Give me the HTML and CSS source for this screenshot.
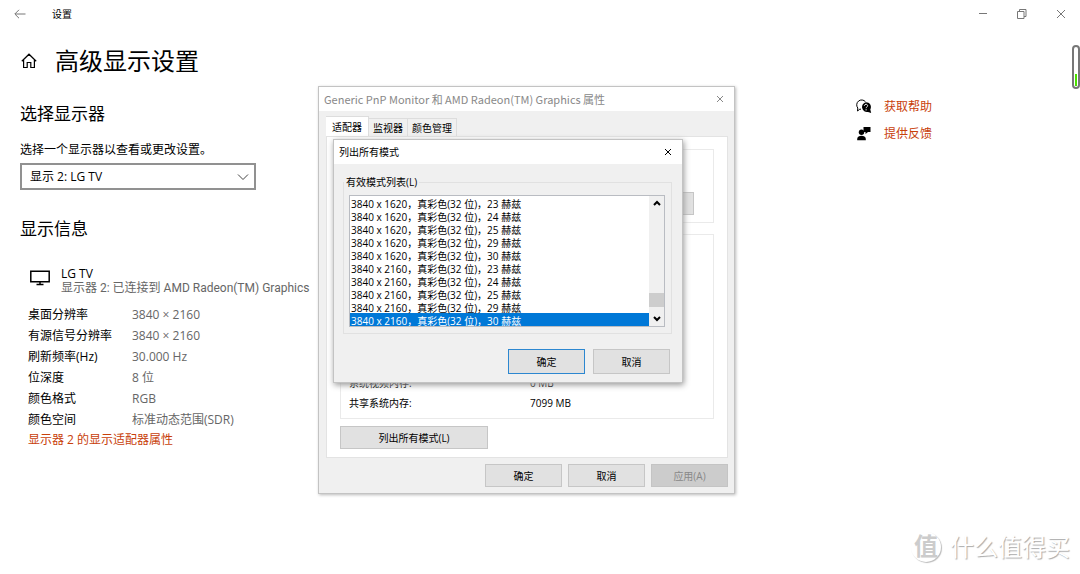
FILE: index.html
```html
<!DOCTYPE html>
<html lang="zh-CN">
<head>
<meta charset="utf-8">
<title>设置</title>
<link rel="stylesheet" href="styles.css">
</head>
<body>
<header class="titlebar">
  <button class="icon-button back" aria-label="返回"><svg width="12" height="10" viewBox="0 0 12 10"><path d="M11.500 5H1M5 .8 .8 5 5 9.200"/></svg></button>
  <span class="app-name">设置</span>
  <div class="window-controls">
    <button class="icon-button" aria-label="最小化"><svg width="10" height="10" viewBox="0 0 10 10"><path d="M1 4.500h8"/></svg></button>
    <button class="icon-button" aria-label="还原"><svg width="10" height="10" viewBox="0 0 10 10"><path d="M.5 2.500h6.500v7H.5zM2.500 2.500v-2h6.500v7H7"/></svg></button>
    <button class="icon-button" aria-label="关闭"><svg width="10" height="10" viewBox="0 0 10 10"><path d="M1 1l8 8M9 1L1 9"/></svg></button>
  </div>
</header>

<main class="page">
  <section class="settings">
    <div class="page-title">
      <svg class="home" width="16" height="16" viewBox="0 0 16 16"><path d="M.8 8.200 8 1.200l7.200 7M2.600 6.700v7.800h3.600V9.500h3.600v5h3.600V6.700"/></svg>
      <h1>高级显示设置</h1>
    </div>
    <h2>选择显示器</h2>
    <label class="picker-label" for="display">选择一个显示器以查看或更改设置。</label>
    <div class="picker">
      <select id="display"><option>显示 2: LG TV</option></select>
      <svg width="12" height="8" viewBox="0 0 12 8"><path d="M1 1.500l5 5 5-5"/></svg>
    </div>
    <h2>显示信息</h2>
    <div class="monitor">
      <svg width="20" height="16" viewBox="0 0 20 16"><path d="M.8 1.200h18.400v10.600H.8zM10 12v2.600M6.500 14.600h7"/></svg>
      <div>
        <div>LG TV</div>
        <div class="muted">显示器 2: 已连接到 AMD Radeon(TM) Graphics</div>
      </div>
    </div>
    <dl class="facts">
      <dt>桌面分辨率</dt><dd>3840 × 2160</dd>
      <dt>有源信号分辨率</dt><dd>3840 × 2160</dd>
      <dt>刷新频率(Hz)</dt><dd>30.000 Hz</dd>
      <dt>位深度</dt><dd>8 位</dd>
      <dt>颜色格式</dt><dd>RGB</dd>
      <dt>颜色空间</dt><dd>标准动态范围(SDR)</dd>
    </dl>
    <a class="link adapter-link" href="#">显示器 2 的显示适配器属性</a>
  </section>

  <nav class="help">
    <a class="link" href="#">
      <svg width="16" height="16" viewBox="0 0 16 16"><path class="line" d="M5 10.200H3.800l-2.300 1.800.3-3A4.600 4.600 0 1 1 9.500 2.800"/><path d="M10 3.200a4.900 4.900 0 0 1 4.300 7.300l.9 3.600-3.200-1.200A4.900 4.900 0 1 1 10 3.200z"/><path class="mark" d="M8.400 6.800c0-2 3.200-2 3.200-.1 0 1.300-1.500 1.200-1.500 2.500M10.100 10.200v1.200"/></svg>
      获取帮助</a>
    <a class="link" href="#">
      <svg width="16" height="16" viewBox="0 0 16 16"><path d="M7.500 1h7v5h-2.500L9.500 8V6h-2z"/><circle cx="5.500" cy="6.300" r="2.700"/><path d="M1.200 14.200v-1.300c0-4.200 8.600-4.200 8.600 0v1.300z"/></svg>
      提供反馈</a>
  </nav>
</main>

<div class="level"><div class="level-fill"></div></div>

<div class="watermark"><span class="badge">值</span><span>什么值得买</span></div>

<div class="dialog properties" role="dialog" aria-labelledby="props-title">
  <div class="dialog-title">
    <span id="props-title">Generic PnP Monitor 和 AMD Radeon(TM) Graphics 属性</span>
    <button class="close" aria-label="关闭"><svg width="8" height="8" viewBox="0 0 8 8"><path d="M1 1l6 6M7 1L1 7"/></svg></button>
  </div>
  <div class="tabs" role="tablist">
    <button class="tab active" role="tab" aria-selected="true">适配器</button>
    <button class="tab" role="tab">监视器</button>
    <button class="tab" role="tab">颜色管理</button>
  </div>
  <div class="panel">
    <div class="group adapter-type"><button class="button" aria-label="属性"></button></div>
    <div class="group adapter-info">
      <dl><dt>系统视频内存:</dt><dd>0 MB</dd><dt>共享系统内存:</dt><dd>7099 MB</dd></dl>
    </div>
    <button class="button list-modes">列出所有模式(L)</button>
  </div>
  <div class="actions">
    <button class="button">确定</button>
    <button class="button">取消</button>
    <button class="button" disabled>应用(A)</button>
  </div>

  <div class="dialog modes" role="dialog" aria-labelledby="modes-title">
    <div class="dialog-title">
      <span id="modes-title">列出所有模式</span>
      <button class="close" aria-label="关闭"><svg width="8" height="8" viewBox="0 0 8 8"><path d="M1 1l6 6M7 1L1 7"/></svg></button>
    </div>
    <div class="mode-group">
      <label for="mode-list">有效模式列表(L)</label>
      <div class="list-frame">
        <select id="mode-list" size="10">
          <option>3840 x 1620，真彩色(32 位)，23 赫兹</option>
          <option>3840 x 1620，真彩色(32 位)，24 赫兹</option>
          <option>3840 x 1620，真彩色(32 位)，25 赫兹</option>
          <option>3840 x 1620，真彩色(32 位)，29 赫兹</option>
          <option>3840 x 1620，真彩色(32 位)，30 赫兹</option>
          <option>3840 x 2160，真彩色(32 位)，23 赫兹</option>
          <option>3840 x 2160，真彩色(32 位)，24 赫兹</option>
          <option>3840 x 2160，真彩色(32 位)，25 赫兹</option>
          <option>3840 x 2160，真彩色(32 位)，29 赫兹</option>
          <option selected>3840 x 2160，真彩色(32 位)，30 赫兹</option>
        </select>
        <div class="scrollbar">
          <svg width="8" height="6" viewBox="0 0 8 6"><path d="M1 5l3-3 3 3"/></svg>
          <div class="thumb"></div>
          <svg width="8" height="6" viewBox="0 0 8 6"><path d="M1 1l3 3 3-3"/></svg>
        </div>
      </div>
    </div>
    <div class="actions">
      <button class="button default">确定</button>
      <button class="button">取消</button>
    </div>
  </div>
</div>
</body>
</html>
```
FILE: styles.css
```css
* { box-sizing: border-box; }
body {
  margin: 0;
  min-height: 100vh;
  background: #fff;
  color: #000;
  font: 12px/15px "Open Sans", "Noto Sans CJK SC", sans-serif;
  overflow: hidden;
}
button, select { font: inherit; color: inherit; }
svg { display: block; flex: none; fill: none; stroke: currentColor; }
h1, h2, dl, dd { margin: 0; font-weight: 400; }

.titlebar { display: flex; align-items: center; height: 28px; padding: 0 9px 0 10px; font-size: 10px; }
.icon-button { display: grid; place-items: center; width: 20px; height: 20px; padding: 0; border: 0; background: none; color: #777; }
.app-name { margin-left: 22px; }
.window-controls { display: flex; gap: 19px; margin-left: auto; }

.page { display: flex; justify-content: space-between; padding: 0 148px 0 20px; }
.page-title { display: flex; align-items: center; gap: 18px; height: 36px; margin-top: 15px; }
.home { stroke-width: 1.200; margin-left: 1px; }
h1 { font-size: 24px; line-height: 36px; }
h2 { margin-top: 23px; font-size: 17px; line-height: 24px; }
.picker-label { display: block; margin-top: 16px; }
.picker { display: grid; align-items: center; width: 236px; margin: 6px 0 27px; }
.picker > * { grid-area: 1 / 1; }
.picker select { width: 100%; height: 27px; padding: 0 8px 1px; appearance: none; border: 2px solid #919191; border-radius: 0; background: #fff; }
.picker svg { justify-self: end; margin-right: 7px; pointer-events: none; color: #444; }
.monitor { display: flex; gap: 11px; margin: 25px 0 0 10px; }
.monitor svg { margin-top: 4px; stroke-width: 1.500; }
.muted, dd { color: #666; }
.muted { font-family: Roboto, "Noto Sans CJK SC", sans-serif; }
.facts { display: grid; grid-template-columns: 104px 1fr; margin: 8px 0 0 8px; line-height: 21px; }
.link { color: #c8400a; text-decoration: none; }
.adapter-link { display: block; margin: 2px 0 0 8px; }
.help { display: grid; align-content: start; gap: 11px; padding-top: 71px; }
.help .link { display: flex; gap: 12px; }
.help svg { fill: #000; stroke: none; }
.help .line { fill: none; stroke: #000; }
.help .mark { fill: none; stroke: #fff; }

.level { position: absolute; top: 45px; right: 0; display: flex; align-items: end; width: 8px; height: 44px; padding: 1px; border: 2px solid #777; border-radius: 4px; }
.level-fill { width: 100%; height: 12px; background: #4be100; }

.watermark { position: absolute; right: 10px; bottom: 10px; display: flex; align-items: center; gap: 9px; color: #fff; font-size: 24px; line-height: 34px; text-shadow: 1px 1px 1px #aaa; }
.badge { width: 30px; height: 30px; border-radius: 50%; text-align: center; line-height: 28px; font-weight: 700; color: #ccc; box-shadow: 1px 1px 1px #bbb; text-shadow: none; }

.dialog { position: absolute; border: 1px solid #c3c3c3; background: #f0f0f0; font: 10px/14px "Open Sans", "Noto Sans CJK SC", sans-serif; }
.properties { left: 318px; top: 86px; width: 417px; box-shadow: 1px 1px 3px #bbb; }
.dialog-title { display: flex; align-items: center; justify-content: space-between; height: 24px; padding: 0 10px 0 5px; background: #fff; }
.properties > .dialog-title { color: #888; }
#props-title { font: 11px/14px "Noto Sans CJK SC", sans-serif; }
.close { display: grid; place-items: center; width: 8px; height: 14px; padding: 0; border: 0; background: none; }
.tabs { display: flex; align-items: end; height: 25px; padding-left: 7px; }
.tab { height: 18px; padding: 0 4px; border: 1px solid #ddd; border-width: 1px 1px 0 0; background: #f0f0f0; line-height: 16px; white-space: nowrap; }
.tab.active { height: 20px; padding: 0 6px; background: #fff; }
.panel { margin: 0 6px 6px 7px; padding: 12px 13px 8px; border: 1px solid #e3e3e3; background: #fff; }
.group { border: 1px solid #eaeaea; }
.adapter-type { display: flex; justify-content: end; height: 74px; padding: 42px 19px 0 0; }
.adapter-info { display: flex; align-items: end; height: 185px; margin: 11px 0 7px; padding: 0 8px 5px; }
.adapter-info dl { display: grid; grid-template-columns: 181px 1fr; line-height: 20px; }
.adapter-info dd { color: #000; }
.button { display: block; width: 77px; height: 23px; padding: 0; border: 1px solid #c6c6c6; background: #e1e1e1; }
.button:disabled { background: #ccc; color: #888; border-color: #c4c4c4; }
.button.default { border-color: #2c87d0; }
.list-modes { width: 148px; }
.actions { display: flex; justify-content: end; gap: 6px; padding: 0 6px 6px; }

.modes { left: 14px; top: 52px; width: 350px; box-shadow: 1px 2px 6px #999; }
.mode-group { position: relative; margin: 18px 10px 0 9px; padding: 12px 6px 6px 5px; border: 1px solid #e1e1e1; }
.mode-group label { position: absolute; left: 0; top: -8px; padding: 0 2px; background: #f0f0f0; }
.list-frame { display: flex; height: 132px; border: 1px solid #b9bcc2; background: #fff; }
#mode-list { flex: 1; min-width: 0; height: 130px; padding: 0; border: 0; border-radius: 0; outline: 0; background: #fff; overflow: hidden; scrollbar-width: none; }
#mode-list option { height: 13px; min-height: 13px; padding: 0 1px; line-height: 11px; color: #000; }
#mode-list option:checked { background: #0078d7 linear-gradient(#0078d7, #0078d7); color: #fff; }
.scrollbar { display: flex; flex-direction: column; align-items: center; width: 15px; padding: 4px 0; background: #f0f0f0; stroke-width: 2; }
.thumb { width: 15px; height: 14px; margin: auto 0 9px; background: #cdcdcd; }
.modes .actions { gap: 8px; padding: 15px 12px 8px; }
.modes .button { height: 25px; }
```
